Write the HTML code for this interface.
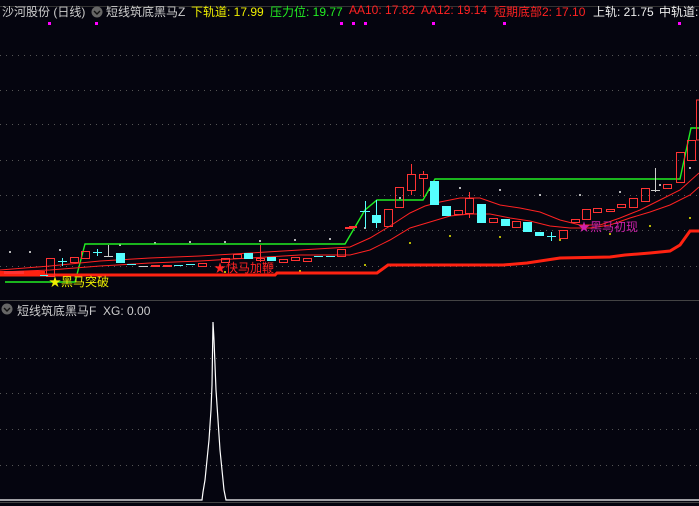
<!DOCTYPE html>
<html><head><meta charset="utf-8"><style>
html,body{margin:0;padding:0;background:#05050f;width:699px;height:506px;overflow:hidden}
.t{position:absolute;font:12px "Liberation Sans","Noto Sans CJK SC",sans-serif;white-space:nowrap;top:3px}
</style></head><body>
<svg width="699" height="506" style="position:absolute;left:0;top:0">
<rect width="699" height="506" fill="#05050f"/>
<g stroke="#555" stroke-width="1" stroke-dasharray="1,5">
<line x1="0" y1="55.5" x2="699" y2="55.5"/><line x1="0" y1="90.5" x2="699" y2="90.5"/>
<line x1="0" y1="124.5" x2="699" y2="124.5"/><line x1="0" y1="160.5" x2="699" y2="160.5"/>
<line x1="0" y1="195.5" x2="699" y2="195.5"/><line x1="0" y1="230.5" x2="699" y2="230.5"/>
<line x1="0" y1="266.5" x2="699" y2="266.5"/>
<line x1="0" y1="358.5" x2="699" y2="358.5"/><line x1="0" y1="393.5" x2="699" y2="393.5"/>
<line x1="0" y1="429.5" x2="699" y2="429.5"/><line x1="0" y1="465.5" x2="699" y2="465.5"/>
</g>
<line x1="0" y1="6.5" x2="699" y2="6.5" stroke="#333"/>
<line x1="0" y1="300.5" x2="699" y2="300.5" stroke="#444"/>
<line x1="0" y1="502.5" x2="699" y2="502.5" stroke="#444"/>
<g fill="#f0f">
<rect x="48" y="22" width="3" height="3"/><rect x="95" y="22" width="3" height="3"/><rect x="340" y="22" width="3" height="3"/><rect x="352" y="22" width="3" height="3"/><rect x="364" y="22" width="3" height="3"/><rect x="432" y="22" width="3" height="3"/><rect x="503" y="22" width="3" height="3"/><rect x="678" y="22" width="3" height="3"/>
</g>
<g fill="#eee">
<circle cx="10" cy="252" r="1"/><circle cx="30" cy="252" r="1"/><circle cx="60" cy="250" r="1"/><circle cx="120" cy="245" r="1"/><circle cx="155" cy="243" r="1"/><circle cx="190" cy="242" r="1"/><circle cx="225" cy="242" r="1"/><circle cx="260" cy="241" r="1"/><circle cx="295" cy="240" r="1"/><circle cx="330" cy="239" r="1"/><circle cx="365" cy="228" r="1"/><circle cx="400" cy="198" r="1"/><circle cx="430" cy="190" r="1"/><circle cx="460" cy="188" r="1"/><circle cx="500" cy="190" r="1"/><circle cx="540" cy="195" r="1"/><circle cx="580" cy="195" r="1"/><circle cx="620" cy="192" r="1"/><circle cx="660" cy="185" r="1"/><circle cx="690" cy="168" r="1"/>
</g>
<g fill="#ee0">
<circle cx="225" cy="272" r="1"/><circle cx="300" cy="271" r="1"/><circle cx="365" cy="265" r="1"/><circle cx="410" cy="243" r="1"/><circle cx="450" cy="236" r="1"/><circle cx="500" cy="237" r="1"/><circle cx="560" cy="240" r="1"/><circle cx="610" cy="234" r="1"/><circle cx="650" cy="226" r="1"/><circle cx="690" cy="218" r="1"/>
</g>
<polyline fill="none" stroke="#22ee22" stroke-width="1.4" points="5,282 75,282 85,244 345,244 365,210 377,200 423,200 435,179 680,179 691,128 699,128"/>
<polyline fill="none" stroke="#f21" stroke-width="3" points="0,275 275,275 277,273 377,273 388,265 503,265 527,263 560,258 610,257 625,255 650,253 670,251 680,245 690,231 699,231"/>
<polyline fill="none" stroke="#f22" stroke-width="1" points="0,270 50,266 100,261 150,258 200,256 250,253 300,250 350,247 370,238 390,226 410,213 425,206 440,202 460,198 480,198 500,205 520,208 540,212 560,220 580,225 600,225 620,218 640,210 660,200 680,190 699,173"/>
<polyline fill="none" stroke="#f22" stroke-width="1" points="0,272 50,270 100,266 150,263 200,261 250,258 300,255 350,255 370,250 390,240 410,228 430,222 450,216 470,214 490,214 510,218 530,221 550,226 570,228 590,228 610,225 630,218 650,212 670,205 690,195 699,187"/>
<rect x="0" y="271" width="45" height="3" fill="#f21"/>
<g stroke-width="1">
<g stroke="#f33" fill="none">
<rect x="46.5" y="258.5" width="8" height="18"/><rect x="70.5" y="257.5" width="8" height="5"/><rect x="81.5" y="251.5" width="8" height="7"/>
<rect x="198.5" y="263.5" width="8" height="3"/><rect x="221.5" y="258.5" width="8" height="4"/><rect x="233.5" y="254.5" width="8" height="4"/>
<line x1="260.5" y1="245" x2="260.5" y2="262"/><rect x="256.5" y="258.5" width="8" height="2"/>
<rect x="279.5" y="259.5" width="8" height="3"/><rect x="291.5" y="257.5" width="8" height="3"/><rect x="303.5" y="258.5" width="8" height="3"/><rect x="337.5" y="249.5" width="8" height="7"/>
<rect x="384.5" y="209.5" width="8" height="17"/><rect x="395.5" y="187.5" width="8" height="20"/>
<line x1="411.5" y1="164" x2="411.5" y2="195"/><rect x="407.5" y="174.5" width="8" height="16" fill="#05050f"/>
<line x1="423.5" y1="171" x2="423.5" y2="197"/><rect x="419.5" y="174.5" width="8" height="4" fill="#05050f"/>
<rect x="454.5" y="210.5" width="8" height="4"/><line x1="469.5" y1="192" x2="469.5" y2="218"/><rect x="465.5" y="198.5" width="8" height="15" fill="#05050f"/>
<rect x="489.5" y="218.5" width="8" height="4"/><rect x="512.5" y="221.5" width="8" height="6"/><rect x="559.5" y="230.5" width="8" height="8"/>
<rect x="571.5" y="219.5" width="8" height="3"/><rect x="582.5" y="209.5" width="8" height="10"/><rect x="593.5" y="208.5" width="8" height="4"/>
<rect x="606.5" y="209.5" width="8" height="2"/><rect x="617.5" y="204.5" width="8" height="3"/><rect x="629.5" y="198.5" width="8" height="9"/>
<rect x="641.5" y="188.5" width="8" height="13"/><rect x="663.5" y="184.5" width="8" height="4"/>
<rect x="676.5" y="152.5" width="8" height="30"/><rect x="687.5" y="140.5" width="8" height="20"/><rect x="696.5" y="100" width="4" height="40"/>
</g>
<g fill="#f33"><rect x="4" y="271" width="20" height="3"/><rect x="151" y="265" width="9" height="2"/><rect x="163" y="265" width="9" height="2"/><rect x="349" y="226" width="8" height="2"/><rect x="345" y="227" width="8" height="2"/></g>
<g stroke="#5ff" fill="#5ff">
<line x1="58" y1="261.5" x2="67" y2="261.5"/><line x1="62.5" y1="258" x2="62.5" y2="266"/>
<line x1="93" y1="252.5" x2="102" y2="252.5"/><line x1="97.5" y1="249" x2="97.5" y2="256"/>
<rect x="116.5" y="253.5" width="8" height="9"/><line x1="127" y1="264.5" x2="136" y2="264.5"/>
<line x1="174" y1="265.5" x2="183" y2="265.5"/><line x1="186" y1="264.5" x2="195" y2="264.5"/>
<rect x="244.5" y="253.5" width="8" height="5"/><rect x="267.5" y="257.5" width="8" height="3"/><line x1="314" y1="256.5" x2="323" y2="256.5"/><line x1="326" y1="256.5" x2="335" y2="256.5"/>
<line x1="360" y1="211.5" x2="370" y2="211.5"/><line x1="365.5" y1="201" x2="365.5" y2="228"/>
<line x1="376.5" y1="200" x2="376.5" y2="228"/><rect x="372.5" y="215.5" width="8" height="7"/>
<rect x="430.5" y="181.5" width="8" height="23"/><rect x="442.5" y="206.5" width="8" height="9"/><rect x="477.5" y="204.5" width="8" height="18"/>
<rect x="501.5" y="219.5" width="8" height="6"/><rect x="523.5" y="222.5" width="8" height="9"/><rect x="535.5" y="232.5" width="8" height="3"/>
<line x1="547" y1="236.5" x2="556" y2="236.5"/><line x1="551.5" y1="232" x2="551.5" y2="241"/>
</g>
<g stroke="#ccc"><line x1="40" y1="275.5" x2="48" y2="275.5" stroke="#5ff"/><line x1="104" y1="256.5" x2="113" y2="256.5"/><line x1="108.5" y1="245" x2="108.5" y2="257"/><line x1="139" y1="266.5" x2="148" y2="266.5"/>
<line x1="651" y1="190.5" x2="660" y2="190.5"/><line x1="655.5" y1="168" x2="655.5" y2="192"/></g>
</g>
<polyline fill="none" stroke="#fff" stroke-width="1.2" points="0,500 202,500 203,492 205,480 207,460 209,440 211,410 212,385 213,322 214,340 216,390 218,420 220,450 222,470 224,490 226,500 699,500"/>
<circle cx="97" cy="12" r="5.5" fill="#666"/><path d="M94,11 L97,14 L100,11" stroke="#111" stroke-width="1.4" fill="none"/>
<circle cx="7" cy="309" r="5.5" fill="#666"/><path d="M4,308 L7,311 L10,308" stroke="#111" stroke-width="1.4" fill="none"/>
</svg>
<div class="t" style="left:2px;color:#ccc">沙河股份 (日线)</div>
<div class="t" style="left:106px;color:#ccc">短线筑底黑马Z</div>
<div class="t" style="left:191px;color:#ee0">下轨道: 17.99</div>
<div class="t" style="left:270px;color:#2e2">压力位: 19.77</div>
<div class="t" style="left:349px;color:#f22">AA10: 17.82</div>
<div class="t" style="left:421px;color:#f22">AA12: 19.14</div>
<div class="t" style="left:494px;color:#f22">短期底部2: 17.10</div>
<div class="t" style="left:593px;color:#eee">上轨: 21.75</div>
<div class="t" style="left:659px;color:#eee">中轨道:</div>
<div class="t" style="left:17px;top:302px;color:#ccc">短线筑底黑马F&nbsp; <span>XG: 0.00</span></div>
<div class="t" style="left:49px;top:273px;color:#ee0">★黑马突破</div>
<div class="t" style="left:214px;top:259px;color:#f22">★快马加鞭</div>
<div class="t" style="left:578px;top:218px;color:#c2a">★黑马初现</div>
</body></html>
